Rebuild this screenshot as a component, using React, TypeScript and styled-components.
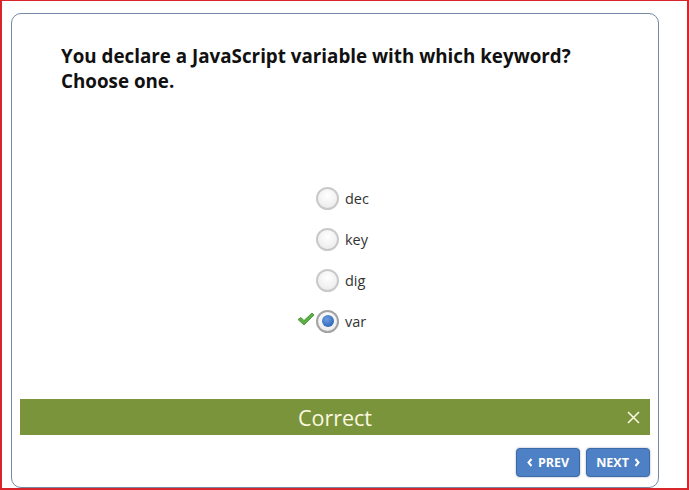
import React, { useState } from "react";
import styled, { createGlobalStyle } from "styled-components";

const GlobalStyle = createGlobalStyle`
  html, body {
    margin: 0;
    padding: 0;
    background: #ffffff;
  }
  body {
    font-family: "Open Sans", "Noto Sans", sans-serif;
  }
`;

const Frame = styled.div`
  box-sizing: border-box;
  width: 689px;
  height: 490px;
  border: 2px solid #d7252b;
  border-top-width: 1px;
  padding: 12px 0 0 9px;
  overflow: hidden;
`;

const Card = styled.div`
  box-sizing: border-box;
  width: 648px;
  height: 475px;
  border: 1px solid #7489a6;
  border-radius: 10px;
  display: flex;
  flex-direction: column;
  background: #ffffff;
`;

const Question = styled.h1`
  margin: 0;
  padding: 30px 40px 0 49px;
  font-size: 18.8px;
  line-height: 25px;
  font-weight: 700;
  color: #111111;
`;

const Options = styled.div`
  display: flex;
  flex-direction: column;
  gap: 19px;
  margin-top: 93px;
  padding-left: 304px;
`;

const Option = styled.label`
  position: relative;
  display: flex;
  align-items: center;
  gap: 6px;
  height: 22px;
  font-size: 14.5px;
  color: #333333;
  cursor: pointer;
`;

const Radio = styled.span<{ checked: boolean }>`
  box-sizing: border-box;
  width: 23px;
  height: 23px;
  border-radius: 50%;
  border: 2.5px solid ${(p) => (p.checked ? "#a3a3a3" : "#c9c9c9")};
  background: radial-gradient(circle at 50% 35%, #ffffff 0%, #f1f1f1 60%, #e4e4e4 100%);
  display: flex;
  align-items: center;
  justify-content: center;
`;

const Dot = styled.span`
  width: 12px;
  height: 12px;
  border-radius: 50%;
  background: radial-gradient(circle at 40% 35%, #6d9de0 0%, #3b73c2 60%, #2c5ea6 100%);
`;

const Check = styled.svg`
  position: absolute;
  left: -19px;
  top: 2px;
`;

const Spacer = styled.div`
  flex: 1;
`;

const Feedback = styled.div`
  margin: 0 8px;
  height: 36px;
  background: #7a943b;
  display: flex;
  align-items: center;
  justify-content: center;
  position: relative;
  color: #fbf9e2;
  font-size: 21.5px;
`;

const Close = styled.svg`
  position: absolute;
  right: 10px;
  top: 12px;
`;

const Nav = styled.div`
  display: flex;
  justify-content: flex-end;
  gap: 6px;
  margin: 13px 8px 10px;
`;

const NavButton = styled.button`
  box-sizing: border-box;
  height: 29px;
  width: 64px;
  border: 1px solid #3d6ba8;
  border-radius: 4px;
  background: #4d80c4;
  box-shadow: 0 0 2px rgba(40, 70, 120, 0.5);
  color: #ffffff;
  font-family: "Open Sans", sans-serif;
  font-weight: 700;
  font-size: 12.5px;
  display: flex;
  align-items: center;
  justify-content: center;
  gap: 5px;
  padding: 0;
  cursor: pointer;
`;

const Chevron = ({ dir }: { dir: "left" | "right" }) => (
  <svg width="6" height="9" viewBox="0 0 6 9">
    <path
      d={dir === "left" ? "M4.5 1 L1.5 4.5 L4.5 8" : "M1.5 1 L4.5 4.5 L1.5 8"}
      fill="none"
      stroke="#ffffff"
      strokeWidth="2"
    />
  </svg>
);

const choices = ["dec", "key", "dig", "var"];

const App: React.FC = () => {
  const [selected, setSelected] = useState(3);
  return (
    <>
      <GlobalStyle />
      <Frame>
        <Card>
          <Question>
            You declare a JavaScript variable with which keyword?
            <br />
            Choose one.
          </Question>
          <Options>
            {choices.map((c, i) => (
              <Option key={c} onClick={() => setSelected(i)}>
                {i === 3 && (
                  <Check width="18" height="14" viewBox="0 0 18 14">
                    <path
                      d="M1 7.5 L4 5.5 L7 8.5 L15 1 L17 3 L7 13 Z"
                      fill="#5cb043"
                      stroke="#3f8e2e"
                      strokeWidth="0.8"
                      strokeLinejoin="round"
                    />
                  </Check>
                )}
                <Radio checked={selected === i}>{selected === i && <Dot />}</Radio>
                {c}
              </Option>
            ))}
          </Options>
          <Spacer />
          <Feedback>
            Correct
            <Close width="13" height="13" viewBox="0 0 13 13">
              <path d="M1 1 L12 12 M12 1 L1 12" stroke="#fbf9e2" strokeWidth="1.6" />
            </Close>
          </Feedback>
          <Nav>
            <NavButton>
              <Chevron dir="left" />
              PREV
            </NavButton>
            <NavButton>
              NEXT
              <Chevron dir="right" />
            </NavButton>
          </Nav>
        </Card>
      </Frame>
    </>
  );
};

export default App;
